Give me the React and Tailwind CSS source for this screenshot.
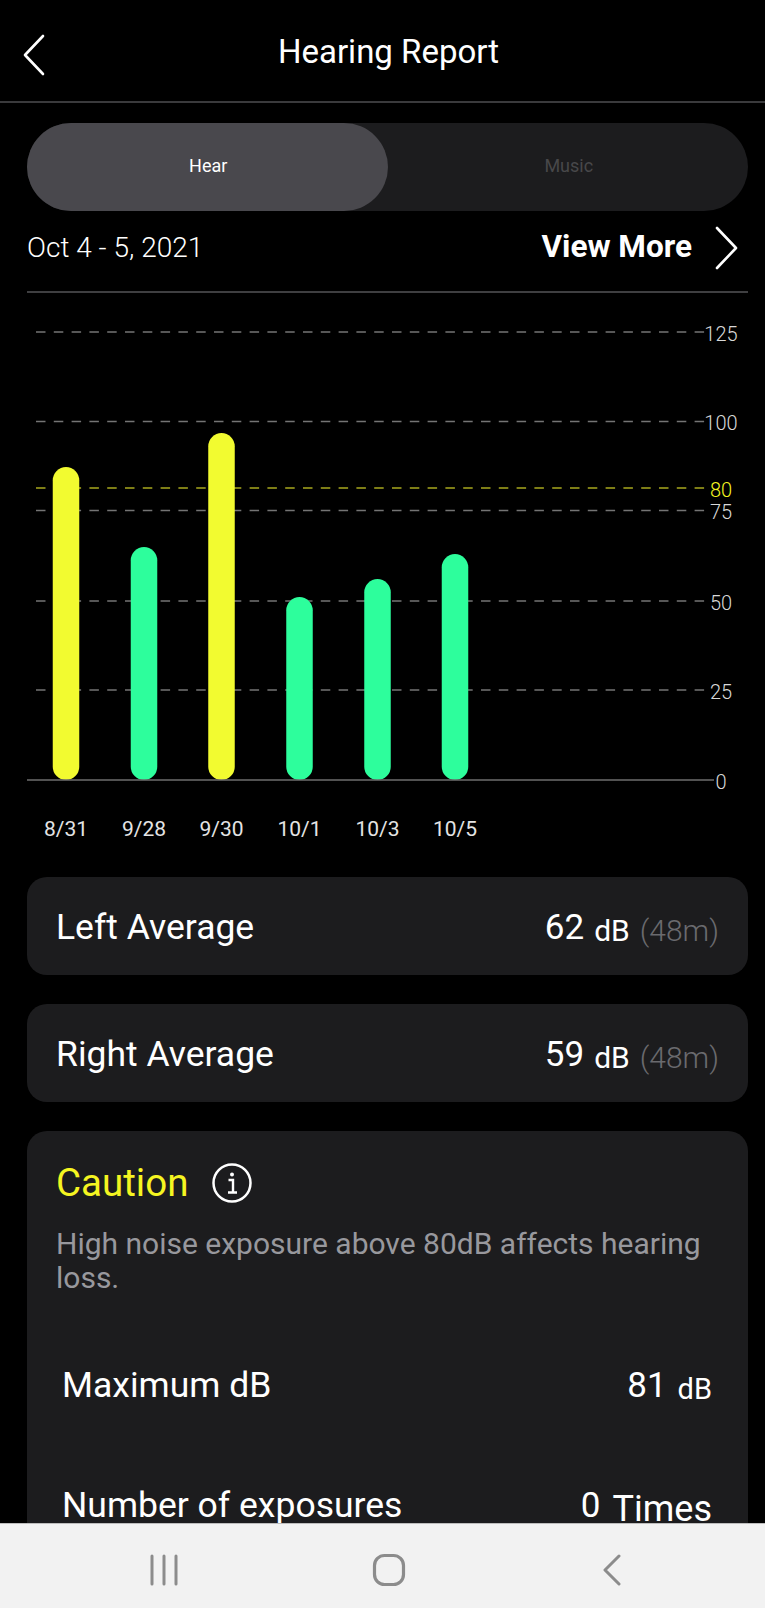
import React from 'react';

const GRID = [
  { label: '125', y: 39 },
  { label: '100', y: 128.5 },
  { label: '80', y: 195, yellow: true },
  { label: '75', y: 217.5 },
  { label: '50', y: 308 },
  { label: '25', y: 397 },
];

const BARS = [
  { date: '8/31', x: 66, top: 174, yellow: true },
  { date: '9/28', x: 144, top: 254 },
  { date: '9/30', x: 221.5, top: 140, yellow: true },
  { date: '10/1', x: 299.5, top: 304 },
  { date: '10/3', x: 377.5, top: 286 },
  { date: '10/5', x: 455, top: 261 },
];

const BASE_Y = 487;

function HearingChart() {
  return (
    <svg width="765" height="562" viewBox="0 0 765 562" className="block">
      {GRID.map((g) => (
        <g key={g.label}>
          <line x1="36" x2="705" y1={g.y} y2={g.y} stroke={g.yellow ? '#a8a81e' : '#747474'} strokeWidth="1.5" strokeDasharray="9.5 8.3" />
          <text x="721" y={g.y + 8.5} textAnchor="middle" fontSize="20" fill={g.yellow ? '#f5f521' : '#d8d8d8'} fontWeight="300">
            {g.label}
          </text>
        </g>
      ))}
      {BARS.map((b) => (
        <g key={b.date}>
          <rect x={b.x - 13.25} y={b.top} width="26.5" height={BASE_Y - b.top} rx="13.25" fill={b.yellow ? '#f2fb30' : '#2dfe9c'} />
          <text x={b.x} y={543} textAnchor="middle" fontSize="21" fill="#e4e4e4" fontWeight="400">
            {b.date}
          </text>
        </g>
      ))}
      <line x1="27" x2="714" y1={BASE_Y} y2={BASE_Y} stroke="#6e6e6e" strokeWidth="1.5" />
      <text x="721" y={BASE_Y + 8.5} textAnchor="middle" fontSize="20" fill="#d8d8d8" fontWeight="300">0</text>
    </svg>
  );
}

function AverageCard({ label, value, className }) {
  return (
    <div className={`h-[98px] rounded-[20px] bg-[#1c1c1e] pl-[29px] pr-[29px] flex items-baseline justify-between pt-[26px] ${className}`}>
      <span className="text-[35.5px] leading-[48px] text-white">{label}</span>
      <span className="flex items-baseline">
        <span className="text-[35px] leading-[48px] text-white">{value}</span>
        <span className="ml-[10px] text-[30px] leading-[48px] text-white relative top-[2px]">dB</span>
        <span className="ml-[10px] text-[30px] leading-[48px] font-light text-[#6a6a6e] relative top-[2px]">(48m)</span>
      </span>
    </div>
  );
}

export default function App() {
  return (
    <div className="w-[765px] h-[1608px] bg-black flex flex-col overflow-hidden font-['Roboto',sans-serif]">
      <div className="flex-1 min-h-0 overflow-hidden">
        {/* header */}
        <div className="relative h-[103px] border-b-2 border-[#3a3a3c] flex items-center justify-center pl-[12px]">
          <svg width="24" height="44" viewBox="0 0 24 44" fill="none" className="absolute left-[22px] top-[33px]">
            <path d="M21 3 L3 22 L21 41" stroke="#fff" strokeWidth="2.6" strokeLinecap="round" strokeLinejoin="round" />
          </svg>
          <span className="text-[33px] leading-none text-white translate-y-[1px]">Hearing Report</span>
        </div>

        <div className="pl-[27px] pr-[17px] pt-[20px]">
          {/* hear / music switch */}
          <div className="h-[88px] rounded-full bg-[#1c1c1e] flex text-[18px]">
            <div className="w-1/2 rounded-full bg-[#49484d] text-white flex items-center justify-center pb-[4px] pl-[2px]">Hear</div>
            <div className="w-1/2 text-[#48484a] flex items-center justify-center pb-[4px] pl-[2px]">Music</div>
          </div>

          <div className="h-[82px] flex items-center justify-between border-b-2 border-[#3f3f41] pb-[6px]">
            <span className="text-[28px] font-light text-white">Oct 4 - 5, 2021</span>
            <span className="flex items-center">
              <span className="text-[31.5px] font-bold text-white -translate-y-[1px]">View More</span>
              <svg width="26" height="46" viewBox="0 0 26 46" fill="none" className="ml-[22px] mr-[8px]">
                <path d="M3 3 L22 23 L3 43" stroke="#fff" strokeWidth="2.6" strokeLinecap="round" strokeLinejoin="round" />
              </svg>
            </span>
          </div>
        </div>

        <HearingChart />

        <div className="pl-[27px] pr-[17px] mt-[22px]">
          <AverageCard label="Left Average" value="62" />
          <AverageCard label="Right Average" value="59" className="mt-[29px]" />

          <div className="mt-[29px] rounded-t-[20px] bg-[#1c1c1e] h-[600px] pl-[29px] pr-[30px] pt-[26px]">
            <div className="flex items-center">
              <span className="text-[38.5px] leading-[52px] text-[#f5f521]">Caution</span>
              <svg width="40" height="40" viewBox="0 0 40 40" fill="none" className="ml-[24px]">
                <circle cx="20" cy="20" r="18.5" stroke="#fff" strokeWidth="2.5" />
                <circle cx="20" cy="11.5" r="2" fill="#fff" />
                <path d="M16.5 17 H21 V29 M16 29.5 H25" stroke="#fff" strokeWidth="2.4" />
              </svg>
            </div>
            <p className="mt-[18px] text-[30px] leading-[34px] text-[#98989d]">High noise exposure above 80dB affects hearing loss.</p>

            <div className="mt-[66px] pl-[6px] pr-[6px] flex items-baseline justify-between">
              <span className="text-[35.5px] leading-[48px] text-white">Maximum dB</span>
              <span className="flex items-baseline">
                <span className="text-[35px] leading-[48px] text-white">81</span>
                <span className="ml-[11px] text-[29px] leading-[48px] text-white relative top-[2px]">dB</span>
              </span>
            </div>
            <div className="mt-[70px] pl-[6px] pr-[6px] flex items-baseline justify-between">
              <span className="text-[35.5px] leading-[48px] text-white">Number of exposures</span>
              <span className="flex items-baseline">
                <span className="text-[35px] leading-[48px] text-white">0</span>
                <span className="ml-[12px] text-[36px] leading-[48px] text-white relative top-[4px]">Times</span>
              </span>
            </div>
          </div>
        </div>
      </div>

      {/* android nav bar */}
      <div className="h-[85px] shrink-0 bg-[#f2f2f2] border-t border-[#bdbdbd] flex items-center relative">
        <div className="w-full flex items-center justify-between pl-[149px] pr-[143px] pt-[8px]">
          <svg width="30" height="32" viewBox="0 0 30 32" fill="none">
            <path d="M3 2 V30 M15 2 V30 M27 2 V30" stroke="#8c8c8c" strokeWidth="3" strokeLinecap="round" />
          </svg>
          <svg width="34" height="34" viewBox="0 0 34 34" fill="none" className="-translate-x-[2px]">
            <rect x="2.5" y="2.5" width="29" height="29" rx="10" stroke="#8c8c8c" strokeWidth="3.2" />
          </svg>
          <svg width="20" height="32" viewBox="0 0 20 32" fill="none">
            <path d="M17 2 L3 16 L17 30" stroke="#8c8c8c" strokeWidth="3" strokeLinecap="round" strokeLinejoin="round" />
          </svg>
        </div>
      </div>
    </div>
  );
}
